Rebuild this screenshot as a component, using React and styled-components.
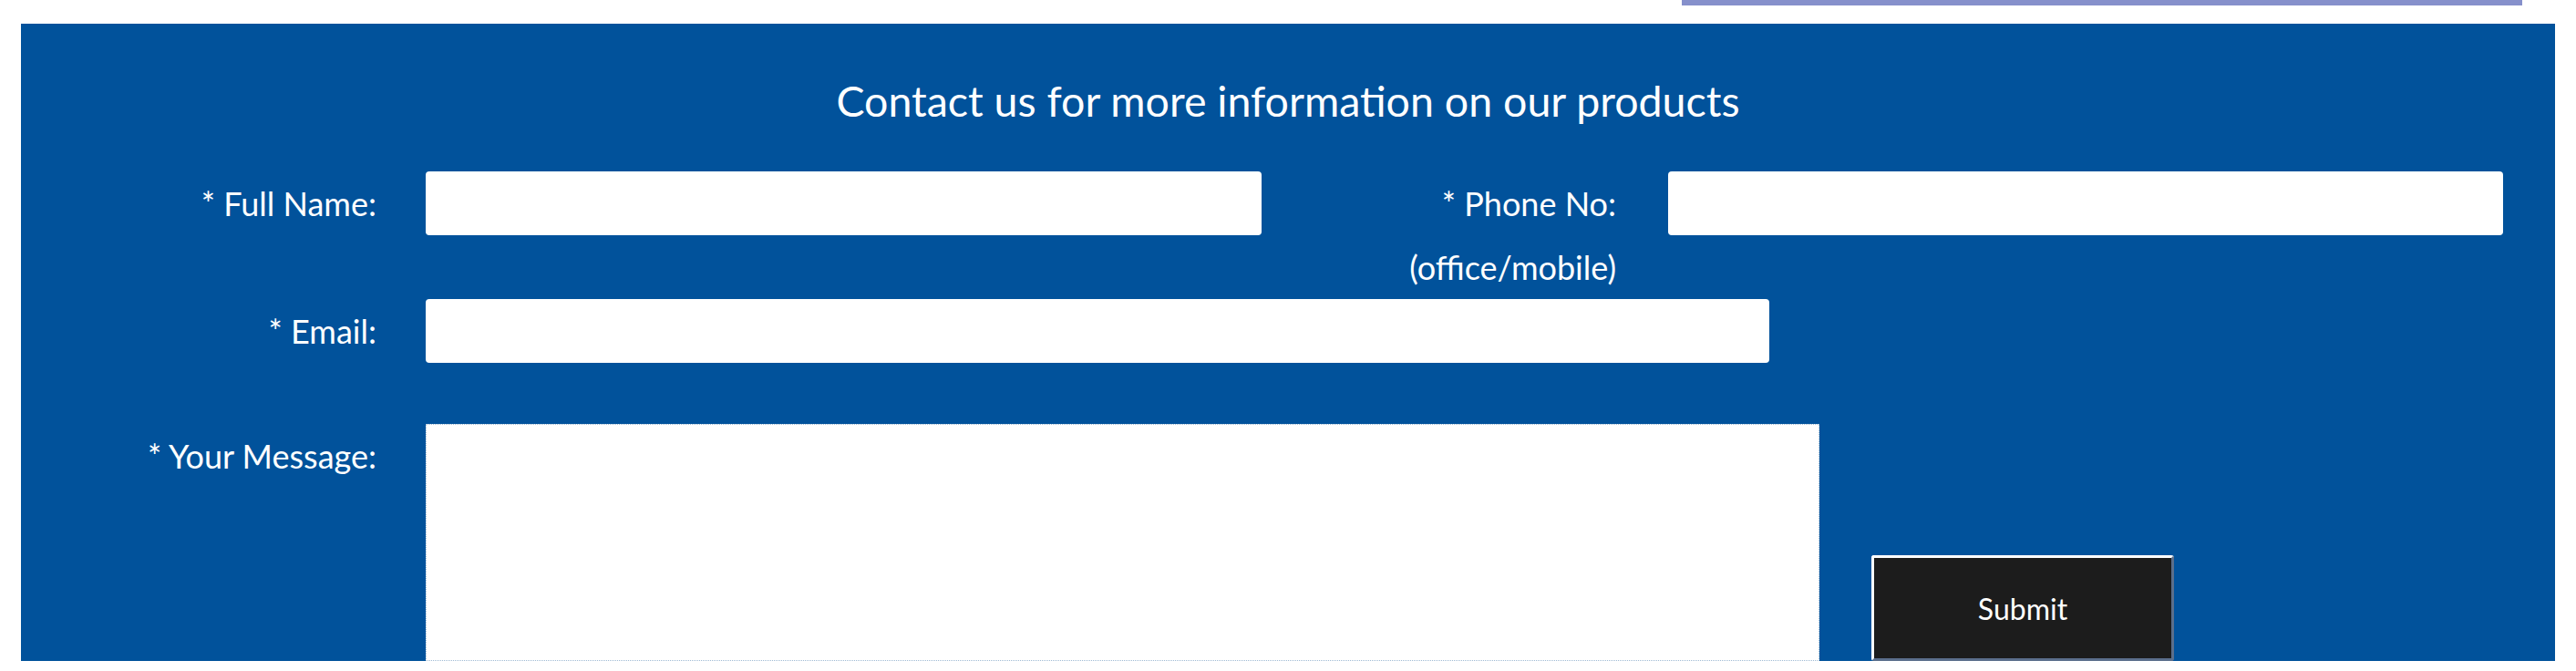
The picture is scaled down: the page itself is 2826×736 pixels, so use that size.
import React from 'react'
import styled, { createGlobalStyle } from 'styled-components'

const GlobalStyle = createGlobalStyle`
  html, body {
    margin: 0;
    padding: 0;
    background: #ffffff;
  }
  body {
    font-family: 'Lato', 'Open Sans', sans-serif;
  }
`

const TopBar = styled.div`
  display: flex;
  justify-content: flex-end;
  padding-right: 59px;
`

const NavStrip = styled.div`
  width: 922px;
  height: 6px;
  background-color: #8690cb;
`

const Panel = styled.section`
  margin: 20px 0 0 23px;
  width: 2780px;
  height: 699px;
  background-color: #01529b;
  color: #ffffff;
  overflow: hidden;
  box-sizing: border-box;
`

const Title = styled.h2`
  margin: 0;
  padding-top: 54px;
  height: 162px;
  box-sizing: border-box;
  text-align: center;
  font-size: 46.5px;
  font-weight: 400;
  line-height: 60px;
`

const Row = styled.div`
  display: flex;
  align-items: ${props => (props.bottom ? 'flex-end' : 'flex-start')};
  margin-bottom: ${props => props.gap || 0}px;
`

const Label = styled.label`
  width: ${props => props.width || 390}px;
  margin-right: ${props => props.space || 54}px;
  flex-shrink: 0;
  align-self: flex-start;
  text-align: right;
  font-size: 36px;
  line-height: 70px;
`

const TextInput = styled.input`
  width: ${props => props.width}px;
  height: 70px;
  border: none;
  border-radius: 4px;
  background: #ffffff;
  box-sizing: border-box;
  padding: 0 14px;
  font-size: 28px;
  outline: none;
`

const MessageBox = styled.textarea`
  display: block;
  width: 1529px;
  height: 260px;
  border: 1px dotted #9fbad3;
  background: #ffffff;
  box-sizing: border-box;
  resize: none;
  font-size: 28px;
  outline: none;
`

const SubmitButton = styled.button`
  margin-left: 57px;
  width: 332px;
  height: 116px;
  background-color: #1c1c1c;
  color: #ffffff;
  font-family: 'Lato', 'Open Sans', sans-serif;
  font-size: 32px;
  border-style: solid;
  border-width: 3px;
  border-color: #ffffff #5b6e8b #5b6e8b #ffffff;
  border-radius: 3px;
  box-sizing: border-box;
  cursor: pointer;
`

export default function App() {
  return (
    <>
      <GlobalStyle />
      <TopBar>
        <NavStrip />
      </TopBar>
      <Panel>
        <Title>Contact us for more information on our products</Title>
        <Row>
          <Label>* Full Name:</Label>
          <TextInput width={917} />
          <Label width={389} space={57}>
            * Phone No:
            <br />
            (office/mobile)
          </Label>
          <TextInput width={916} />
        </Row>
        <Row gap={67}>
          <Label>* Email:</Label>
          <TextInput width={1474} />
        </Row>
        <Row bottom>
          <Label>* Your Message:</Label>
          <MessageBox />
          <SubmitButton type="button">Submit</SubmitButton>
        </Row>
      </Panel>
    </>
  )
}
